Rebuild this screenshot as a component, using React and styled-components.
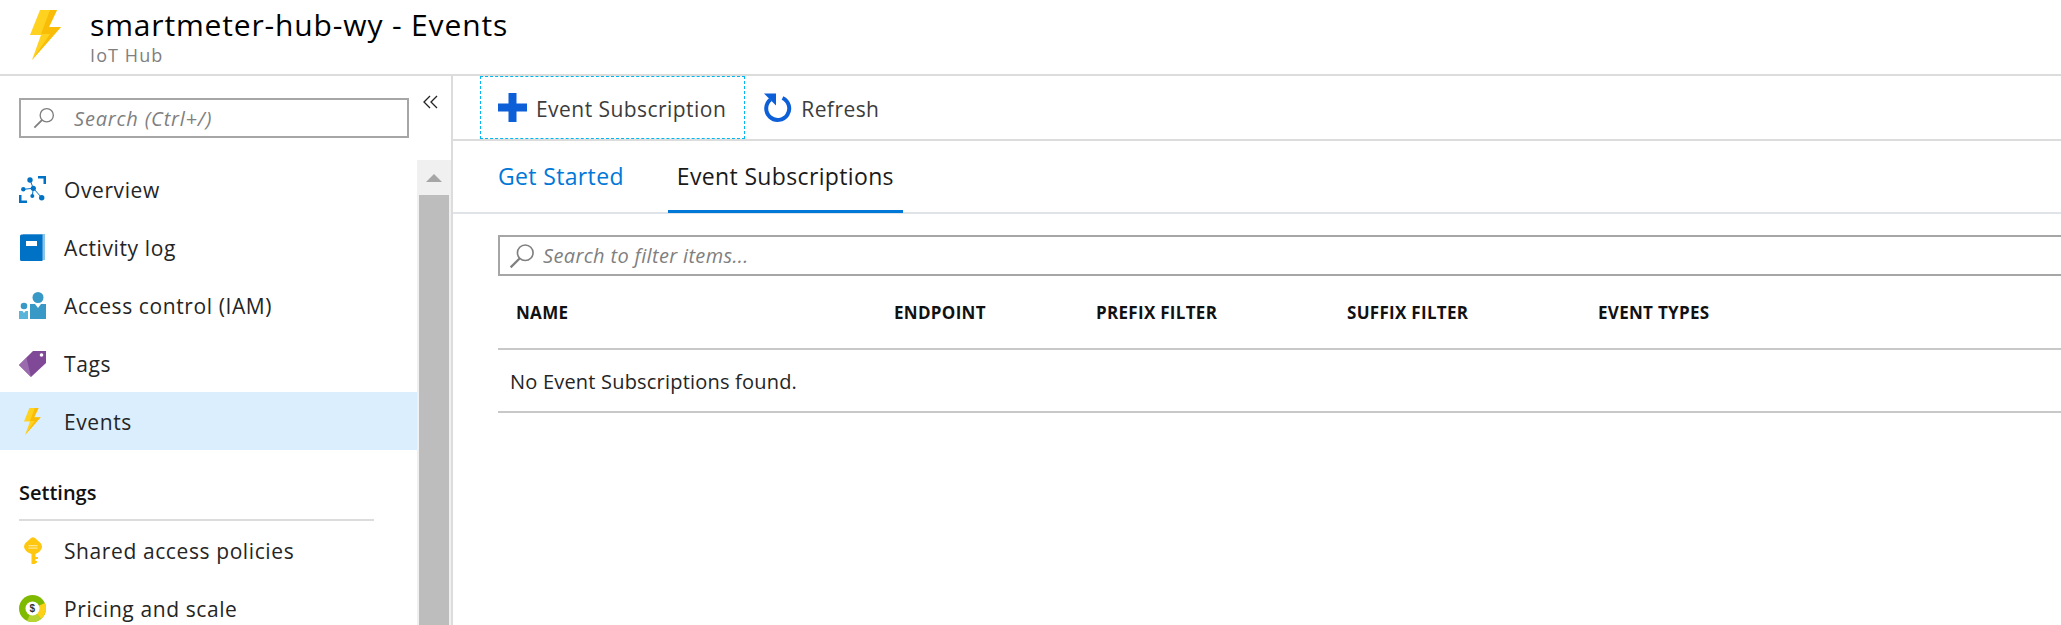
import React from 'react';
import styled, { createGlobalStyle } from 'styled-components';

const GlobalStyle = createGlobalStyle`
    html, body {
        margin: 0;
        padding: 0;
        height: 100%;
        background: #fff;
        overflow: hidden;
    }
    body {
        font-family: "Open Sans", "Noto Sans", "Liberation Sans", sans-serif;
        color: #252525;
    }
    * { box-sizing: border-box; }
`

const Page = styled.div`
    width: 2061px;
    height: 625px;
    display: flex;
    flex-direction: column;
    overflow: hidden;
`
const Header = styled.header`
    flex: none;
    height: 76px;
    display: flex;
    align-items: flex-start;
    padding: 10px 0 0 30px;
    border-bottom: 2px solid #dcdcdc;
`
const HeaderText = styled.div`
    margin: -4px 0 0 29px;
    display: flex;
    flex-direction: column;
`
const Title = styled.h1`
    margin: 0;
    font-size: 30px;
    line-height: 38px;
    font-weight: 400;
    color: #000;
    letter-spacing: 0.85px;
    white-space: nowrap;
`
const Subtitle = styled.div`
    font-size: 18px;
    line-height: 22px;
    color: #7f7f7f;
    letter-spacing: 1.1px;
`
const Body = styled.div`
    flex: 1;
    display: flex;
    min-height: 0;
`
const Sidebar = styled.aside`
    flex: none;
    width: 453px;
    display: flex;
    flex-direction: column;
    border-right: 2px solid #dcdcdc;
    min-height: 0;
`
const SidebarTop = styled.div`
    flex: none;
    height: 84px;
    display: flex;
    align-items: flex-start;
    padding: 22px 0 0 19px;
`
const SearchBox = styled.div`
    width: 390px;
    height: 40px;
    display: flex;
    align-items: center;
    padding-left: 12px;
    border: 2px solid #a6a6a6;
    font-size: 20px;
    font-style: italic;
    color: #7f7f7f;
    letter-spacing: 0.8px;
`
const SearchLabel = styled.span`
    margin-left: 19px;
`
const CollapseButton = styled.button`
    border: none;
    background: transparent;
    padding: 0;
    margin: -3px 0 0 14px;
    width: 16px;
    height: 16px;
    display: flex;
`
const SidebarScroll = styled.div`
    flex: 1;
    display: flex;
    min-height: 0;
`
const NavList = styled.nav`
    flex: none;
    width: 417px;
    overflow: hidden;
`
const NavItem = styled.div`
    height: 58px;
    display: flex;
    align-items: center;
    padding: 1px 0 0 19px;
    font-size: 21px;
    letter-spacing: 0.6px;
    color: #252525;
    background: ${props => props.$active ? '#dbeefe' : 'transparent'};
`
const NavIcon = styled.span`
    flex: none;
    width: 27px;
    height: 27px;
    margin: -1px 18px 0 0;
    display: flex;
    align-items: center;
    justify-content: center;
`
const SectionTitle = styled.div`
    margin: 27px 43px 0 19px;
    padding-bottom: 11px;
    border-bottom: 2px solid #dcdcdc;
    font-size: 20px;
    line-height: 31px;
    font-weight: 600;
    color: #111;
`
const Scrollbar = styled.div`
    flex: none;
    width: 34px;
    display: flex;
    flex-direction: column;
    background: #f0f0f0;
`
const ScrollArrow = styled.div`
    flex: none;
    height: 35px;
    display: flex;
    align-items: center;
    justify-content: center;
    &::before {
        content: '';
        border-left: 8px solid transparent;
        border-right: 8px solid transparent;
        border-bottom: 8px solid #a6a6a6;
    }
`
const ScrollThumb = styled.div`
    flex: 1;
    margin: 0 2px;
    background: #bdbdbd;
`
const Main = styled.main`
    flex: 1;
    min-width: 0;
    display: flex;
    flex-direction: column;
`
const Toolbar = styled.div`
    flex: none;
    height: 65px;
    display: flex;
    padding-left: 27px;
    border-bottom: 2px solid #dcdcdc;
`
const ToolButton = styled.button`
    height: 63px;
    display: flex;
    align-items: center;
    border: 1px dashed ${props => props.$focused ? '#00b7f1' : 'transparent'};
    background: transparent;
    padding: 2px 18px 0 17px;
    font: inherit;
    font-size: 21px;
    letter-spacing: 0.45px;
    color: #3c3c3c;
`
const ToolIcon = styled.span`
    display: flex;
    margin: -2px 9px 0 0;
`
const Tabs = styled.div`
    flex: none;
    height: 73px;
    display: flex;
    padding-left: 45px;
    border-bottom: 2px solid #e0e4e8;
`
const Tab = styled.div`
    height: 72px;
    display: flex;
    align-items: center;
    padding: 1px ${props => props.$active ? '9px' : '0'} 0;
    margin-right: ${props => props.$active ? '0' : '44px'};
    font-size: 23px;
    letter-spacing: 0.35px;
    color: ${props => props.$active ? '#1a1a1a' : '#0078d7'};
    border-bottom: 3px solid ${props => props.$active ? '#0078d7' : 'transparent'};
`
const Content = styled.div`
    flex: 1;
    padding: 21px 0 0 45px;
`
const FilterBox = styled.div`
    height: 41px;
    display: flex;
    align-items: center;
    padding-left: 9px;
    border: 2px solid #a6a6a6;
    border-right: none;
    font-size: 20px;
    font-style: italic;
    color: #7f7f7f;
    letter-spacing: 0.35px;
`
const FilterLabel = styled.span`
    margin-left: 8px;
`
const TableHead = styled.div`
    height: 74px;
    display: grid;
    grid-template-columns: 378px 202px 251px 251px 1fr;
    align-items: center;
    padding-left: 18px;
    border-bottom: 2px solid #c8c8c8;
`
const HeadCell = styled.div`
    font-size: 17px;
    font-weight: 700;
    color: #111;
    letter-spacing: 0.3px;
`
const EmptyRow = styled.div`
    height: 63px;
    display: flex;
    align-items: center;
    padding: 1px 0 0 12px;
    font-size: 20px;
    letter-spacing: 0.2px;
    color: #252525;
    border-bottom: 2px solid #c8c8c8;
`

function Bolt({ size }) {
    return (
        <svg width={size * 0.62} height={size} viewBox="0 0 31 50">
            <path d="M10 0H27L19 17H31L2 50L11 25H0Z" fill="#ffd21f" />
            <path d="M20 0H27L19 17H31L2 50L20 24H11Z" fill="#f7b500" opacity="0.75" />
        </svg>
    )
}

function SearchIcon({ size }) {
    return (
        <svg width={size} height={size} viewBox="0 0 24 24" fill="none" stroke="#7f7f7f" strokeWidth="1.5">
            <circle cx="15" cy="9" r="7.2" />
            <path d="M10 14L1.500 22.500" strokeWidth="2" />
        </svg>
    )
}

function OverviewIcon() {
    return (
        <svg width="27" height="27" viewBox="0 0 27 27">
            <g fill="#0072c6">
                <path d="M19 0H27V8H24.500V2.500H19Z" />
                <path d="M0 19H2.500V24.500H8V27H0Z" />
                <circle cx="11" cy="4" r="2.700" />
                <circle cx="4.300" cy="13.300" r="2.200" />
                <circle cx="14.300" cy="12.300" r="2.600" />
                <circle cx="22.700" cy="21.700" r="2.700" />
                <circle cx="13.300" cy="20" r="2" />
            </g>
            <g stroke="#0072c6" strokeWidth="1">
                <path d="M11 4L14.300 12.300L22.700 21.700M4.300 13.300L14.300 12.300L13.300 20" fill="none" />
            </g>
        </svg>
    )
}

function BookIcon() {
    return (
        <svg width="25" height="27" viewBox="0 0 25 27">
            <path d="M3 0H25V26H3Z" fill="#8cc4e8" />
            <path d="M1.500 0.500H22.500V27H1.500A1.500 1.500 0 0 1 0 25.500V2A1.500 1.500 0 0 1 1.500 0.500Z" fill="#0072c6" />
            <path d="M6 7H17V12H6Z" fill="#fff" />
        </svg>
    )
}

function AccessIcon() {
    return (
        <svg width="27" height="27" viewBox="0 0 27 27">
            <circle cx="19" cy="5.500" r="5.500" fill="#3999c6" />
            <circle cx="5" cy="14" r="3.300" fill="#3999c6" />
            <path d="M11 12H27V27H11Z" fill="#3999c6" />
            <path d="M16 12L19 16L22 12Z" fill="#fff" />
            <path d="M0 19H9V27H0Z" fill="#59b4d9" />
            <path d="M3.500 19L5 21L6.500 19Z" fill="#fff" />
        </svg>
    )
}

function TagIcon() {
    return (
        <svg width="27" height="27" viewBox="0 0 27 27">
            <path d="M14 1H27V13L12 27L0 15Z" fill="#804998" />
            <path d="M14 1L7.500 8L12 27L0 15Z" fill="#9a6cad" />
            <circle cx="22.500" cy="5" r="1.800" fill="#fff" />
        </svg>
    )
}

function KeyIcon() {
    return (
        <svg width="18" height="27" viewBox="0 0 18 27">
            <path d="M7 1Q9 -0.500 11 1L17 6.500Q18 8 18 10Q17 15 11.500 17V20H14V22H11.500V24H13V25.500L10.500 27H7.500V17Q1 15 0 10Q0 8 1 6.500Z" fill="#ffc70f" />
            <path d="M4.500 8H13.500V9.300H4.500ZM4.500 10.500H13.500V11.800H4.500Z" fill="#ffe690" />
        </svg>
    )
}

function PricingIcon() {
    return (
        <svg width="27" height="27" viewBox="0 0 27 27">
            <circle cx="13.500" cy="13.500" r="13.500" fill="#7fba00" />
            <path d="M26 8A13.500 13.500 0 0 1 22 24L13.500 13.500Z" fill="#fcd116" />
            <path d="M8 26A13.500 13.500 0 0 0 22 24L13.500 13.500Z" fill="#b8d432" />
            <circle cx="13.500" cy="13.500" r="7" fill="#fff" />
            <text x="13.500" y="17" textAnchor="middle" fontSize="10" fontWeight="700" fontFamily="Liberation Sans, sans-serif" fill="#333">$</text>
        </svg>
    )
}

function PlusIcon() {
    return (
        <svg width="29" height="29" viewBox="0 0 29 29">
            <path d="M10.500 0H18.500V10.500H29V18.500H18.500V29H10.500V18.500H0V10.500H10.500Z" fill="#0d5fd8" />
        </svg>
    )
}

function RefreshIcon() {
    return (
        <svg width="29" height="30" viewBox="0 0 29 30" fill="none">
            <path d="M7.500 6.500A11.500 11.500 0 1 0 19.500 5" stroke="#0d5fd8" strokeWidth="4" />
            <path d="M1 0.500H13V12.500Z" fill="#0d5fd8" />
        </svg>
    )
}

const navTop = [
    { label: 'Overview', icon: <OverviewIcon /> },
    { label: 'Activity log', icon: <BookIcon /> },
    { label: 'Access control (IAM)', icon: <AccessIcon /> },
    { label: 'Tags', icon: <TagIcon /> },
    { label: 'Events', icon: <Bolt size={27} />, active: true },
];

const navSettings = [
    { label: 'Shared access policies', icon: <KeyIcon /> },
    { label: 'Pricing and scale', icon: <PricingIcon /> },
];

const columns = [
    'NAME', 'ENDPOINT', 'PREFIX FILTER', 'SUFFIX FILTER', 'EVENT TYPES',
];

function renderNavItem(item) {
    return (
        <NavItem key={item.label} $active={item.active}>
            <NavIcon>{item.icon}</NavIcon>
            {item.label}
        </NavItem>
    )
}

export default function App() {
    return (
        <Page>
            <GlobalStyle />
            <Header>
                <Bolt size={50} />
                <HeaderText>
                    <Title>smartmeter-hub-wy - Events</Title>
                    <Subtitle>IoT Hub</Subtitle>
                </HeaderText>
            </Header>
            <Body>
                <Sidebar>
                    <SidebarTop>
                        <SearchBox>
                            <SearchIcon size={22} />
                            <SearchLabel>Search (Ctrl+/)</SearchLabel>
                        </SearchBox>
                        <CollapseButton aria-label="Collapse">
                            <svg width="15" height="14" viewBox="0 0 15 14" fill="none" stroke="#222" strokeWidth="1.300">
                                <path d="M7 1L1 7L7 13M14 1L8 7L14 13" />
                            </svg>
                        </CollapseButton>
                    </SidebarTop>
                    <SidebarScroll>
                        <NavList>
                            {navTop.map(renderNavItem)}
                            <SectionTitle>Settings</SectionTitle>
                            {navSettings.map(renderNavItem)}
                        </NavList>
                        <Scrollbar>
                            <ScrollArrow />
                            <ScrollThumb />
                        </Scrollbar>
                    </SidebarScroll>
                </Sidebar>
                <Main>
                    <Toolbar>
                        <ToolButton $focused>
                            <ToolIcon><PlusIcon /></ToolIcon>
                            Event Subscription
                        </ToolButton>
                        <ToolButton>
                            <ToolIcon><RefreshIcon /></ToolIcon>
                            Refresh
                        </ToolButton>
                    </Toolbar>
                    <Tabs>
                        <Tab>Get Started</Tab>
                        <Tab $active>Event Subscriptions</Tab>
                    </Tabs>
                    <Content>
                        <FilterBox>
                            <SearchIcon size={26} />
                            <FilterLabel>Search to filter items...</FilterLabel>
                        </FilterBox>
                        <TableHead>
                            {columns.map(col => <HeadCell key={col}>{col}</HeadCell>)}
                        </TableHead>
                        <EmptyRow>No Event Subscriptions found.</EmptyRow>
                    </Content>
                </Main>
            </Body>
        </Page>
    )
}
